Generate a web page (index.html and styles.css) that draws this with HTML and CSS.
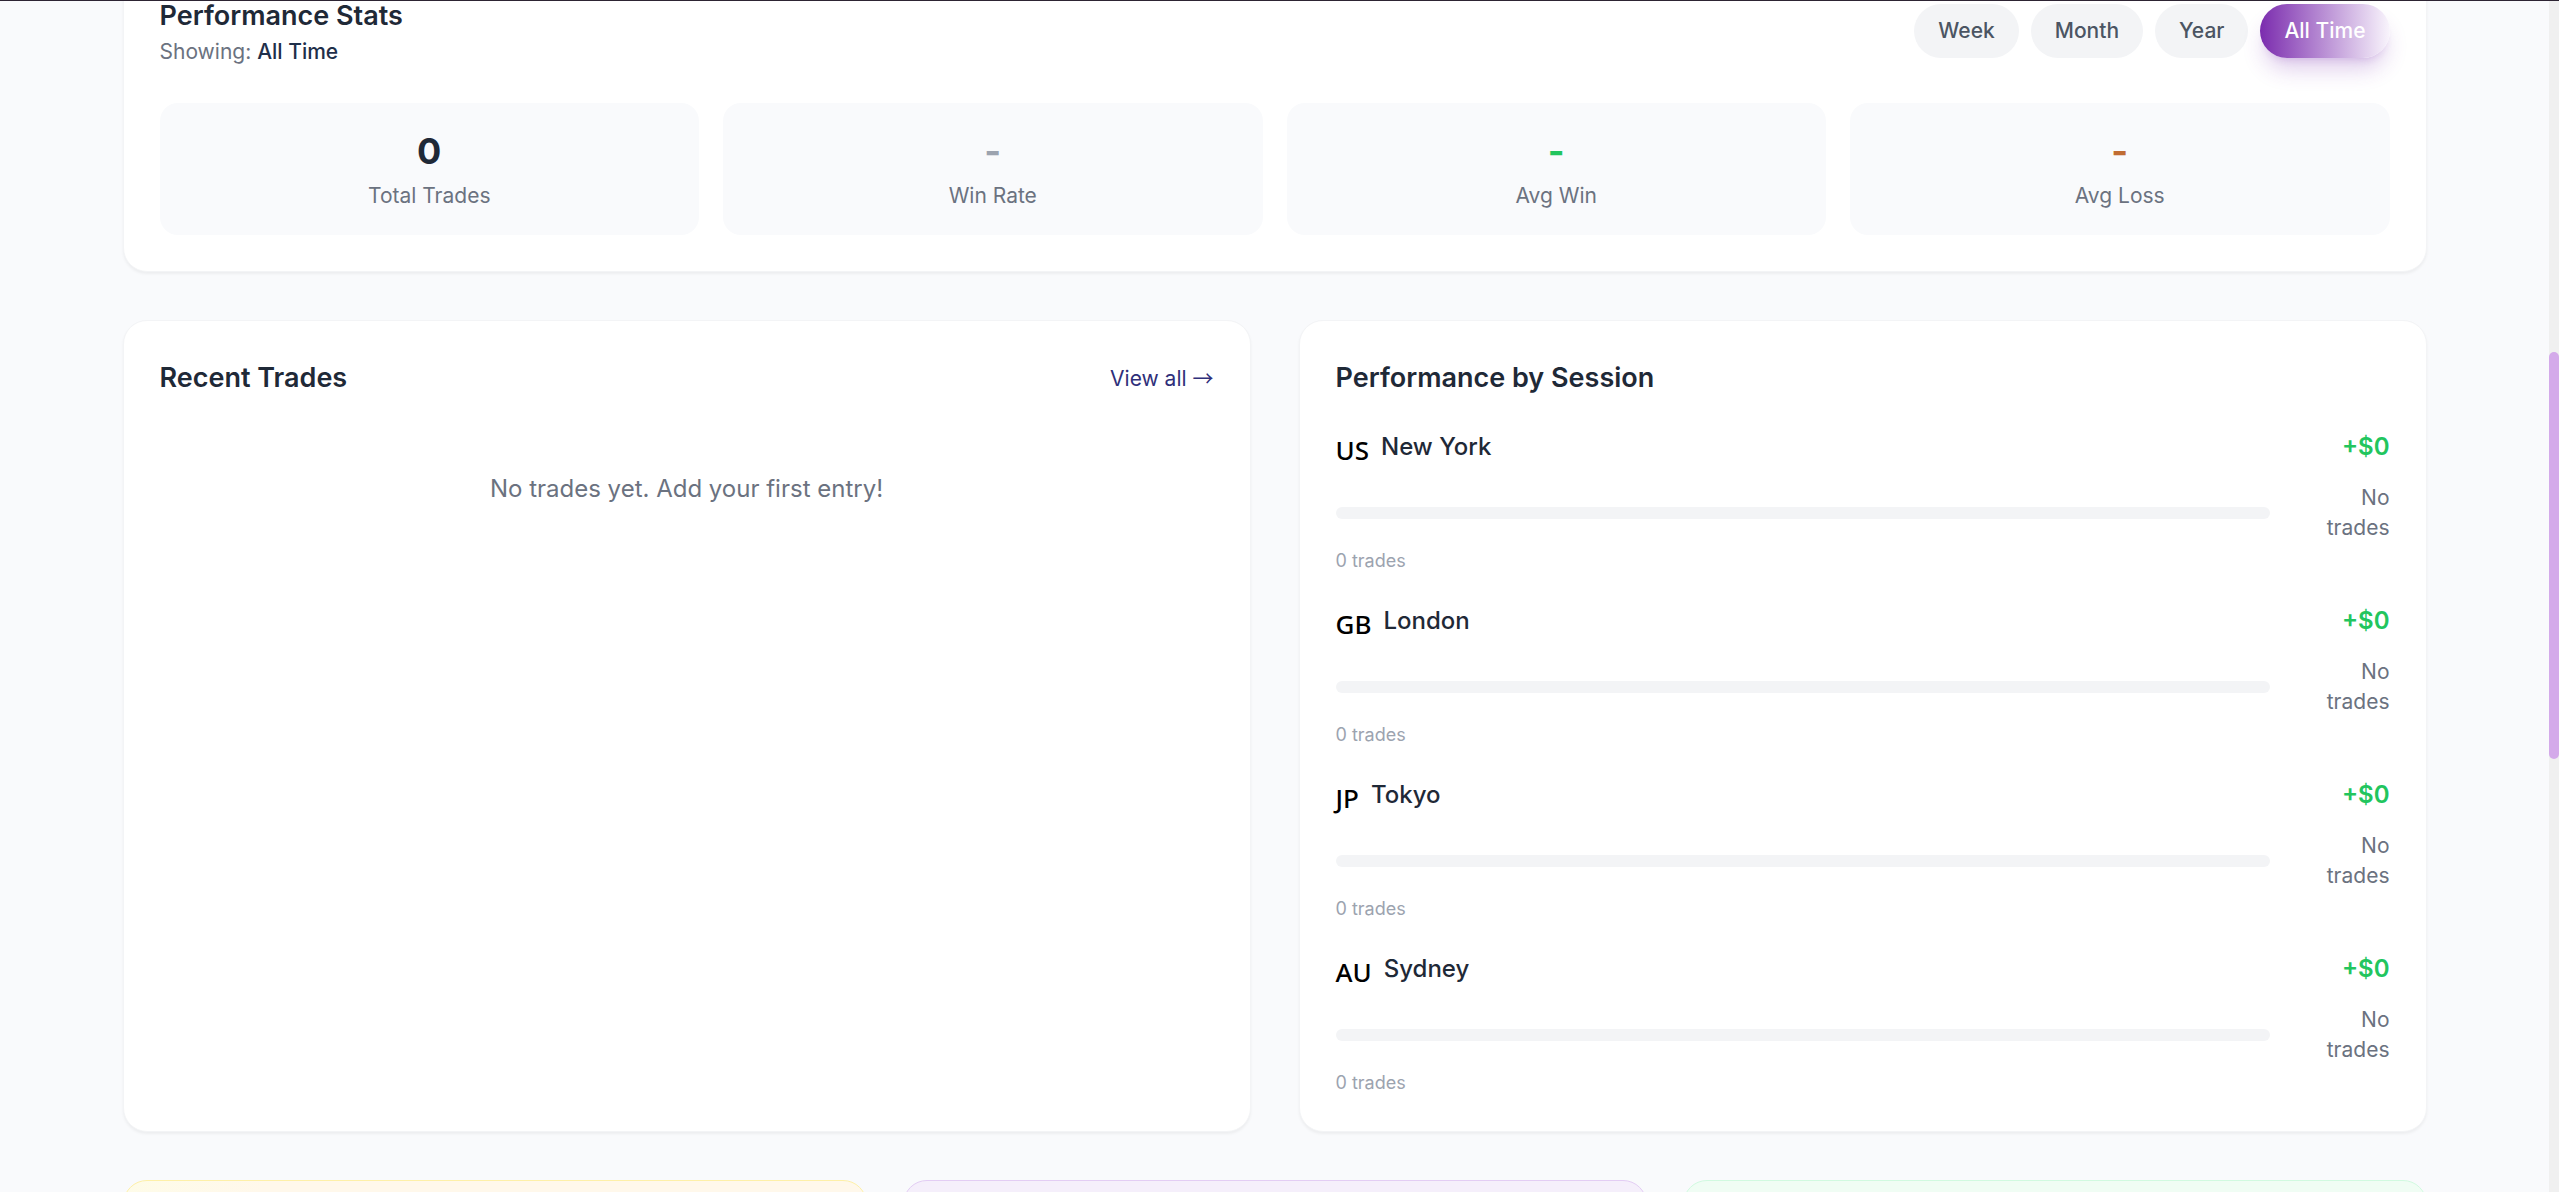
FILE: index.html
```html
<!DOCTYPE html>
<html lang="en">
<head>
    <meta charset="UTF-8">
    <meta name="viewport" content="width=device-width, initial-scale=1.0">
    <title>Trading Journal</title>
    <link rel="stylesheet" href="styles.css">
</head>
<body>
<div class="viewport">
    <main class="page">
        <div class="container">
            <section class="card stats-card">
                <div class="card-header">
                    <div>
                        <h2>Performance Stats</h2>
                        <p class="showing">Showing: <span>All Time</span></p>
                    </div>
                    <div class="filters">
                        <button type="button" class="filter">Week</button>
                        <button type="button" class="filter">Month</button>
                        <button type="button" class="filter">Year</button>
                        <button type="button" class="filter active">All Time</button>
                    </div>
                </div>
                <div class="stats">
                    <div class="stat">
                        <div class="stat-value">0</div>
                        <div class="stat-label">Total Trades</div>
                    </div>
                    <div class="stat">
                        <div class="stat-value muted">-</div>
                        <div class="stat-label">Win Rate</div>
                    </div>
                    <div class="stat">
                        <div class="stat-value win">-</div>
                        <div class="stat-label">Avg Win</div>
                    </div>
                    <div class="stat">
                        <div class="stat-value loss">-</div>
                        <div class="stat-label">Avg Loss</div>
                    </div>
                </div>
            </section>

            <div class="columns">
                <section class="card">
                    <div class="card-header">
                        <h2>Recent Trades</h2>
                        <a href="#" class="view-all">View all <span class="arrow">→</span></a>
                    </div>
                    <p class="empty">No trades yet. Add your first entry!</p>
                </section>

                <section class="card">
                    <div class="card-header">
                        <h2>Performance by Session</h2>
                    </div>
                    <div class="sessions">
                        <div class="session">
                            <div class="session-top">
                                <span class="flag">US</span>
                                <span class="session-name">New York</span>
                                <span class="session-pnl">+$0</span>
                            </div>
                            <div class="session-bar">
                                <div class="bar"></div>
                                <span class="rate">No trades</span>
                            </div>
                            <p class="session-count">0 trades</p>
                        </div>
                        <div class="session">
                            <div class="session-top">
                                <span class="flag">GB</span>
                                <span class="session-name">London</span>
                                <span class="session-pnl">+$0</span>
                            </div>
                            <div class="session-bar">
                                <div class="bar"></div>
                                <span class="rate">No trades</span>
                            </div>
                            <p class="session-count">0 trades</p>
                        </div>
                        <div class="session">
                            <div class="session-top">
                                <span class="flag">JP</span>
                                <span class="session-name">Tokyo</span>
                                <span class="session-pnl">+$0</span>
                            </div>
                            <div class="session-bar">
                                <div class="bar"></div>
                                <span class="rate">No trades</span>
                            </div>
                            <p class="session-count">0 trades</p>
                        </div>
                        <div class="session">
                            <div class="session-top">
                                <span class="flag">AU</span>
                                <span class="session-name">Sydney</span>
                                <span class="session-pnl">+$0</span>
                            </div>
                            <div class="session-bar">
                                <div class="bar"></div>
                                <span class="rate">No trades</span>
                            </div>
                            <p class="session-count">0 trades</p>
                        </div>
                    </div>
                </section>
            </div>

            <div class="tips">
                <div class="tip tip-yellow"></div>
                <div class="tip tip-purple"></div>
                <div class="tip tip-green"></div>
            </div>
        </div>
    </main>
    <div class="scrollbar">
        <div class="thumb"></div>
    </div>
</div>
</body>
</html>
```

FILE: styles.css
```css
* {
    box-sizing: border-box;
}
body {
    margin: 0;
    font-family: Inter, "Liberation Sans", sans-serif;
    background-color: #f9fafc;
    color: #1f2937;
}
h2, p {
    margin: 0;
}
.viewport {
    display: flex;
    height: 100vh;
    overflow: hidden;
    border-top: 1px solid #2d2433;
}
.page {
    flex: 1;
    min-width: 0;
    overflow: hidden;
}
.container {
    max-width: 2304px;
    margin: 0 auto;
}
.card {
    background-color: #fff;
    border: 1px solid #f3f4f6;
    border-radius: 24px;
    padding: 36px;
    box-shadow: 0 2px 3px rgba(0, 0, 0, 0.05);
}
/* the page is scrolled down, only the lower part of this card shows */
.stats-card {
    margin-top: -43px;
    margin-bottom: 48px;
}
.card-header {
    display: flex;
    justify-content: space-between;
    align-items: center;
    margin-bottom: 24px;
}
.stats-card .card-header {
    margin-bottom: 36px;
}
h2 {
    font-size: 27px;
    line-height: 42px;
    font-weight: 600;
}
.showing {
    font-size: 21px;
    line-height: 30px;
    color: #6b7280;
}
.showing span {
    font-weight: 500;
    color: #1f2f4a;
}
.filters {
    display: flex;
    gap: 12px;
}
.filter {
    border: none;
    border-radius: 27px;
    padding: 12px 24px;
    font-family: inherit;
    font-size: 21px;
    line-height: 30px;
    font-weight: 500;
    color: #4b5563;
    background-color: #f3f4f6;
    cursor: pointer;
}
.filter.active {
    color: #fff;
    background: linear-gradient(90deg, #7b2cae, #f9f5fc);
    box-shadow: 0 15px 22px -4px rgba(123, 44, 174, 0.24), 0 6px 9px -6px rgba(123, 44, 174, 0.24);
}
.stats {
    display: grid;
    grid-template-columns: repeat(4, 1fr);
    gap: 24px;
}
.stat {
    padding: 24px;
    border-radius: 18px;
    background-color: #f9fafc;
    text-align: center;
}
.stat-value {
    font-size: 36px;
    line-height: 48px;
    font-weight: 700;
}
.stat-value.muted {
    color: #9ca3af;
}
.stat-value.win {
    color: #22c55e;
}
.stat-value.loss {
    color: #c06c33;
}
.stat-label {
    margin-top: 6px;
    font-size: 21px;
    line-height: 30px;
    color: #6b7280;
}
.columns {
    display: grid;
    grid-template-columns: 1fr 1fr;
    gap: 48px;
    margin-bottom: 48px;
}
.view-all {
    font-size: 21px;
    line-height: 30px;
    color: #2f2f7a;
    text-decoration: none;
}
.arrow {
    font-family: "Noto Sans CJK JP", sans-serif;
}
.empty {
    padding: 48px 0;
    text-align: center;
    font-size: 24px;
    line-height: 36px;
    color: #6b7280;
}
.sessions {
    display: flex;
    flex-direction: column;
    gap: 24px;
}
.session-top {
    display: flex;
    align-items: center;
    height: 48px;
    margin-bottom: 12px;
}
.flag {
    align-self: flex-end;
    margin-right: 12px;
    font-family: "Noto Sans", sans-serif;
    font-size: 26px;
    line-height: 42px;
    font-weight: 500;
    color: #000;
}
.session-name {
    font-size: 24px;
    line-height: 36px;
    font-weight: 500;
}
.session-pnl {
    margin-left: auto;
    font-size: 24px;
    line-height: 36px;
    font-weight: 600;
    color: #22c55e;
}
.session-bar {
    display: flex;
    align-items: center;
    gap: 48px;
}
.bar {
    flex: 1;
    height: 12px;
    border-radius: 6px;
    background-color: #f3f4f6;
}
.rate {
    width: 72px;
    text-align: right;
    font-size: 21px;
    line-height: 30px;
    color: #6b7280;
}
.session-count {
    margin-top: 6px;
    font-size: 18px;
    line-height: 24px;
    color: #9ca3af;
}
.tips {
    display: grid;
    grid-template-columns: repeat(3, 1fr);
    gap: 36px;
}
.tip {
    height: 240px;
    border: 1px solid;
    border-radius: 24px;
}
.tip-yellow {
    background: linear-gradient(135deg, #fefce8, #fff8eb 15%, #fff8eb);
    border-color: #fef0a8;
}
.tip-purple {
    background-color: #f5effb;
    border-color: #e3cdf4;
}
.tip-green {
    background-color: #f0fdf4;
    border-color: #d1fae0;
}
.scrollbar {
    width: 10px;
    padding-top: 351px;
    background-color: #f0f0f0;
}
.thumb {
    height: 407px;
    border-radius: 5px;
    background-color: #d4aaea;
}
```
